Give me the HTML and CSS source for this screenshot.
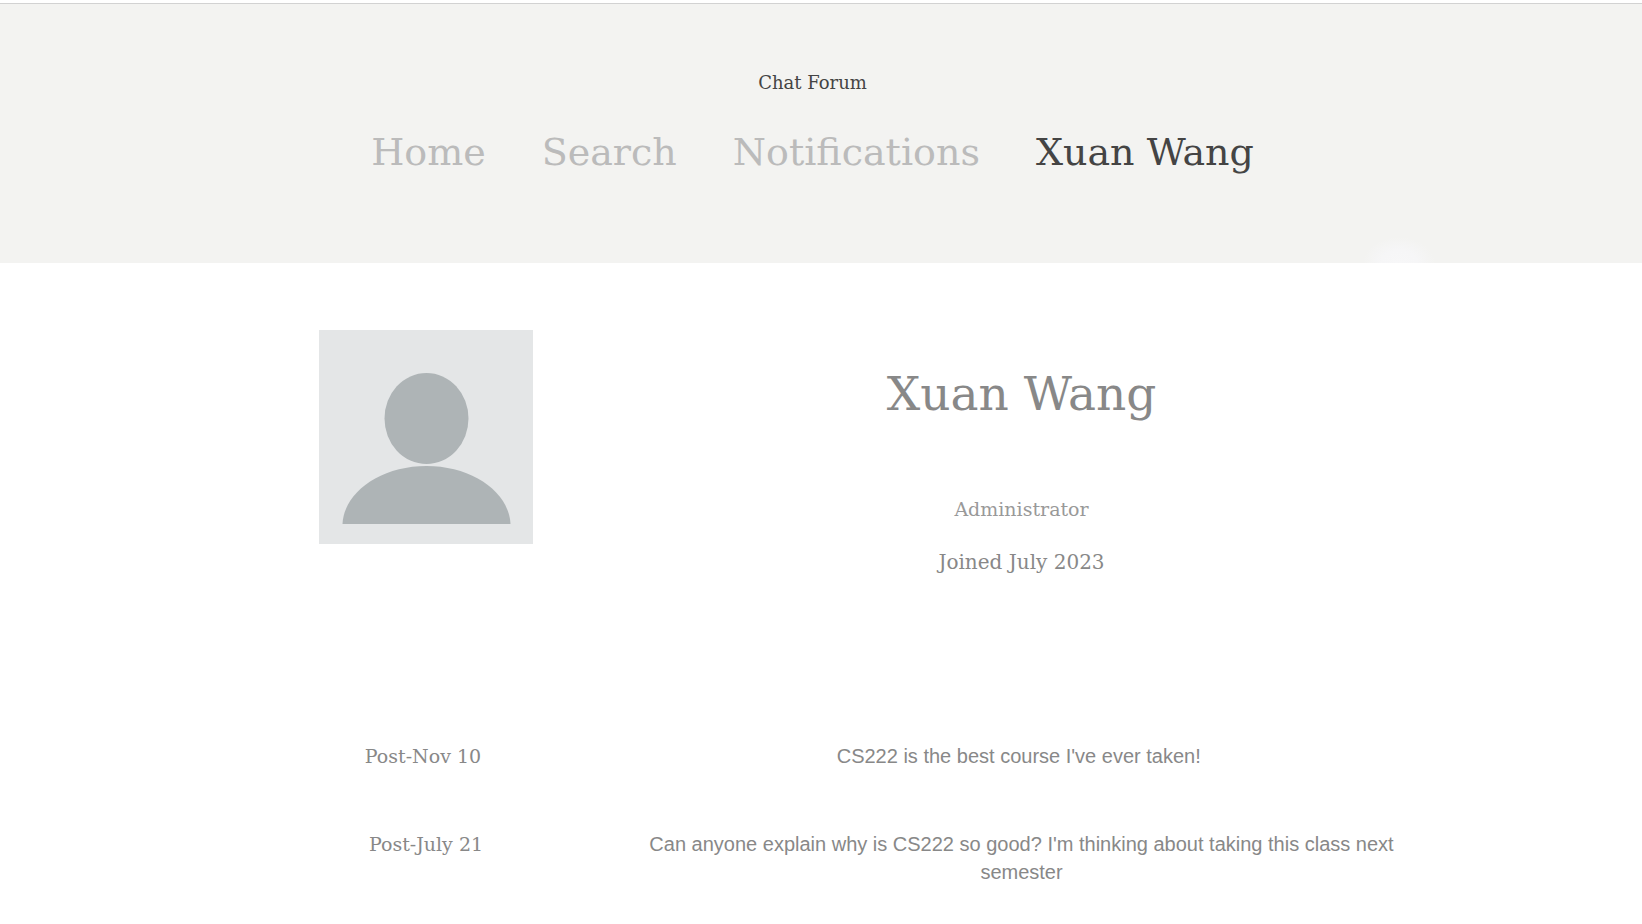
FILE: index.html
```html
<!DOCTYPE html>
<html lang="en">
<head>
<meta charset="utf-8">
<title>Chat Forum</title>
<link rel="stylesheet" href="styles.css">
</head>
<body>
<header class="header">
  <a class="brand" href="#">Chat Forum</a>
  <nav class="nav">
    <a href="#">Home</a>
    <a href="#">Search</a>
    <a href="#">Notifications</a>
    <a class="active" href="#" aria-current="page">Xuan Wang</a>
  </nav>
</header>
<main class="main">
  <section class="row profile">
    <svg class="avatar" viewBox="0 0 214 214" role="img" aria-label="Profile picture">
      <rect width="214" height="214" fill="#e4e6e7"/>
      <ellipse cx="107.500" cy="88.500" rx="42" ry="45.500" fill="#aeb4b6"/>
      <path d="M23.500 194C25 162 62 136 107.500 136S190 162 191.500 194Z" fill="#aeb4b6"/>
    </svg>
    <div class="details">
      <h1>Xuan Wang</h1>
      <p class="role">Administrator</p>
      <p>Joined July 2023</p>
    </div>
  </section>
  <article class="row post">
    <h2>Post-Nov 10&nbsp;</h2>
    <p>CS222 is the best course I've ever taken!&nbsp;</p>
  </article>
  <article class="row post">
    <h2>Post-July 21</h2>
    <p>Can anyone explain why is CS222 so good? I'm thinking about taking this class next semester</p>
  </article>
</main>
</body>
</html>
```
FILE: styles.css
```css
* { box-sizing: border-box; }
body {
  margin: 0;
  padding-top: 3px;
  background: #fff;
  color: #888;
  font: 20px/28px "DejaVu Serif", serif;
}
h1, h2, p { margin: 0; font-weight: 400; }
a { color: inherit; text-decoration: none; }
.header {
  display: flex;
  flex-direction: column;
  align-items: center;
  gap: 26px;
  padding: 65px 17px 82px 0;
  border-top: 1px solid #d2d2d2;
  background: radial-gradient(ellipse 36px 26px at 85.2% 100%, #f7f7f8 0, #f6f6f7 50%, #f3f3f100 100%) #f3f3f1;
}
.brand { font-size: 18px; line-height: 28px; color: #444; }
.nav {
  display: flex;
  flex-wrap: wrap;
  justify-content: center;
  gap: 0 56px;
  font-size: 38px;
  line-height: 58px;
  color: #bbb;
}
.active { color: #444; }
.main {
  max-width: 1208px;
  margin: 0 auto;
  padding: 67px 17px 0 0;
}
.row {
  display: grid;
  grid-template-columns: 418fr 773fr;
  justify-items: center;
  text-align: center;
}
.avatar { width: 214px; height: 214px; }
.profile { min-height: 412px; align-items: start; }
.details { padding-top: 32px; }
h1 { font-size: 47px; line-height: 64px; margin-bottom: 69px; }
.role { margin-bottom: 25px; font-size: 19px; color: #999; }
.post + .post { margin-top: 60px; }
.post h2 { font-size: 19px; line-height: 28px; }
.post p { font-family: "Liberation Sans", Arial, sans-serif; padding: 0 8px; }
```
